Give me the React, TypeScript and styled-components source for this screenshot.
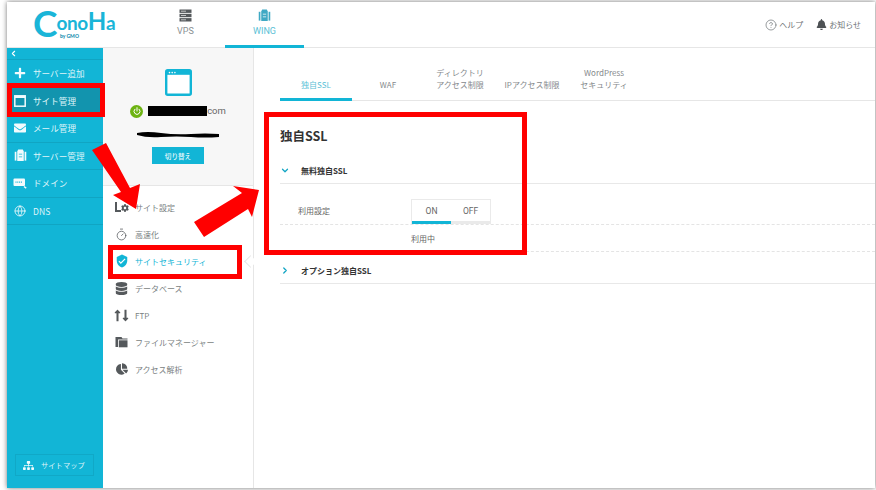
import React from "react";
import styled, { createGlobalStyle } from "styled-components";
import { FaPlus, FaEnvelope, FaBell, FaSitemap, FaDatabase, FaChartPie, FaCog, FaLongArrowAltUp, FaLongArrowAltDown } from "react-icons/fa";
import { MdVerifiedUser } from "react-icons/md";
import { CircleHelp, Timer, Globe, Power, ChevronLeft, ChevronDown, ChevronRight } from "lucide-react";

const GlobalStyle = createGlobalStyle`
  html, body { margin: 0; padding: 0; background: #fff; }
  * { box-sizing: border-box; }
  body { font-family: "Noto Sans CJK JP", "Noto Sans", sans-serif; }
`;

const Page = styled.div`
  position: relative;
  width: 876px;
  height: 490px;
  padding: 2px 1px 2px 7px;
  overflow: hidden;
`;

const Frame = styled.div`
  width: 868px;
  height: 486px;
  background: #fff;
  box-shadow: 0 0 5px rgba(0, 0, 0, 0.55);
  display: flex;
  flex-direction: column;
`;

const Header = styled.header`
  height: 46px;
  flex: none;
  display: flex;
  align-items: stretch;
  border-bottom: 1px solid #e6e6e6;
  padding-right: 14px;
`;

const LogoBox = styled.div`
  position: relative;
  width: 139px;
  padding: 9px 0 0 26px;
  font-family: "Lato", sans-serif;
  font-weight: 700;
  font-size: 19px;
  line-height: 20px;
  letter-spacing: -0.4px;
  color: #1ab5d8;
  white-space: nowrap;
`;

const LogoCap = styled.span`
  font-size: 37px;
  vertical-align: -7px;
  line-height: 20px;
  letter-spacing: -1px;
`;

const LogoTall = styled.span`
  font-size: 24px;
  line-height: 20px;
`;

const LogoBy = styled.span`
  position: absolute;
  left: 53px;
  top: 32px;
  font-size: 5px;
  line-height: 5px;
  letter-spacing: 0;
  font-weight: 900;
  color: #1a8fb0;
`;

const HeaderTab = styled.div<{ $active?: boolean }>`
  width: 79px;
  display: flex;
  flex-direction: column;
  align-items: center;
  padding-top: 7px;
  gap: 3px;
  font-family: "Roboto", sans-serif;
  font-size: 9px;
  line-height: 12px;
  color: ${(p) => (p.$active ? "#5bbfd6" : "#8a8f92")};
  border-bottom: 3px solid ${(p) => (p.$active ? "#12b5d6" : "transparent")};
  margin-bottom: -1px;
`;

const HeaderRight = styled.div`
  margin-left: auto;
  display: flex;
  align-items: center;
  gap: 13px;
  font-size: 8px;
  color: #6d7275;
`;

const HeaderLink = styled.span`
  display: flex;
  align-items: center;
  gap: 2px;
`;

const Body = styled.div`
  flex: 1;
  display: flex;
  min-height: 0;
`;

const Sidebar = styled.nav`
  width: 96px;
  flex: none;
  background: #12b5d6;
  display: flex;
  flex-direction: column;
  color: #dff4f9;
`;

const Collapse = styled.div`
  height: 12px;
  flex: none;
  display: flex;
  align-items: center;
  padding-left: 2px;
  border-bottom: 1px solid #10a5c3;
  color: #fff;
`;

const SideItem = styled.div<{ $active?: boolean }>`
  height: 27.5px;
  flex: none;
  display: flex;
  align-items: center;
  font-size: 8.6px;
  border-bottom: 1px solid #10a5c3;
  background: ${(p) => (p.$active ? "#1294ae" : "transparent")};
`;

const SideIcon = styled.span`
  width: 26px;
  flex: none;
  display: flex;
  justify-content: center;
  color: #f2fbfd;
`;

const SiteMapWrap = styled.div`
  margin-top: auto;
  padding: 0 9px 12px 8px;
`;

const SiteMapButton = styled.div`
  height: 22px;
  border: 1px solid #10a8c7;
  display: flex;
  align-items: center;
  gap: 7px;
  padding-left: 7px;
  font-size: 7.3px;
`;

const SubPanel = styled.aside`
  width: 151px;
  flex: none;
  border-right: 1px solid #e6e6e6;
  display: flex;
  flex-direction: column;
  position: relative;
`;

const SiteCard = styled.div`
  height: 138px;
  background: #f7f7f7;
  border-bottom: 1px solid #e6e6e6;
  display: flex;
  flex-direction: column;
  align-items: center;
  padding-top: 21px;
`;

const DomainRow = styled.div`
  display: flex;
  align-items: center;
  margin-top: 8px;
  font-family: "Roboto", sans-serif;
  font-size: 9.5px;
  line-height: 14px;
  color: #666;
`;

const PowerDot = styled.span`
  width: 13px;
  height: 13px;
  border-radius: 50%;
  background: #6db312;
  color: #fff;
  display: flex;
  align-items: center;
  justify-content: center;
  margin-right: 5px;
`;

const Redacted = styled.span`
  width: 59px;
  height: 10px;
  background: #000;
`;

const Scribble = styled.svg`
  margin-top: 12px;
`;

const SwitchButton = styled.div`
  width: 52px;
  height: 17px;
  margin-top: 9px;
  background: #12b5d6;
  color: #eafafd;
  font-size: 6.6px;
  font-weight: 500;
  display: flex;
  align-items: center;
  justify-content: center;
`;

const SubList = styled.div`
  display: flex;
  flex-direction: column;
  padding: 7.5px 0 0 11px;
`;

const SubItem = styled.div<{ $active?: boolean }>`
  height: 27px;
  display: flex;
  align-items: center;
  gap: 6px;
  font-size: 8px;
  color: ${(p) => (p.$active ? "#12b5d6" : "#7a7f82")};
`;

const SubIcon = styled.span<{ $active?: boolean }>`
  width: 15px;
  flex: none;
  display: flex;
  justify-content: center;
  color: ${(p) => (p.$active ? "#12b5d6" : "#55595c")};
`;

const GearWrap = styled.span`
  display: flex;
  align-items: flex-end;
`;

const ArrowsWrap = styled.span`
  display: flex;
  & > svg:first-child {
    margin-right: -5px;
  }
`;

const Notch = styled.span`
  position: absolute;
  right: -1px;
  top: 209px;
  width: 9px;
  height: 9px;
  margin-right: -0.5px;
  background: #fff;
  border-left: 1px solid #e6e6e6;
  border-bottom: 1px solid #e6e6e6;
  transform: rotate(45deg);
`;

const Content = styled.main`
  flex: 1;
  padding: 0 0 0 26px;
  display: flex;
  flex-direction: column;
`;

const Tabs = styled.div`
  height: 53px;
  flex: none;
  display: flex;
  border-bottom: 1px solid #e6e6e6;
`;

const Tab = styled.div<{ $active?: boolean }>`
  width: 72px;
  height: 53px;
  padding-bottom: 7px;
  display: flex;
  align-items: flex-end;
  justify-content: center;
  text-align: center;
  white-space: pre-line;
  font-size: 8px;
  line-height: 12px;
  color: ${(p) => (p.$active ? "#5bbfd6" : "#85898c")};
  border-bottom: 3px solid ${(p) => (p.$active ? "#12b5d6" : "transparent")};
`;

const Title = styled.h1`
  margin: 26px 0 7px;
  font-size: 12.5px;
  line-height: 18px;
  font-weight: 700;
  color: #333;
`;

const SectionHead = styled.div`
  height: 27px;
  flex: none;
  margin-top: 5px;
  display: flex;
  align-items: center;
  gap: 11px;
  border-bottom: 1px solid #e8e8e8;
  font-size: 8px;
  font-weight: 700;
  color: #333;
`;

const ChevronBox = styled.span`
  width: 10px;
  display: flex;
  justify-content: center;
  color: #12a5c4;
`;

const SettingRow = styled.div`
  height: 41px;
  flex: none;
  padding: 15px 0 0 18px;
  display: flex;
  border-bottom: 1px dashed #e4e4e4;
`;

const SettingLabel = styled.span`
  width: 113px;
  flex: none;
  font-size: 8px;
  line-height: 24px;
  color: #666;
`;

const Toggle = styled.div`
  width: 80px;
  height: 25px;
  display: flex;
  border: 1px solid #eaeaea;
  border-bottom: none;
`;

const ToggleSide = styled.div<{ $on?: boolean }>`
  flex: 1;
  text-align: center;
  font-family: "Roboto", sans-serif;
  font-size: 8.5px;
  line-height: 22px;
  color: #666;
  border-bottom: 3px solid ${(p) => (p.$on ? "#12b5d6" : "#eaeaea")};
`;

const StatusRow = styled.div`
  height: 27px;
  flex: none;
  padding-left: 131px;
  font-size: 8px;
  line-height: 27px;
  color: #666;
  border-bottom: 1px dashed #e4e4e4;
`;

const RedBox = styled.div<{ $l: number; $t: number; $w: number; $h: number }>`
  position: absolute;
  left: ${(p) => p.$l}px;
  top: ${(p) => p.$t}px;
  width: ${(p) => p.$w}px;
  height: ${(p) => p.$h}px;
  border: 5px solid #ff0000;
`;

const Overlay = styled.svg`
  position: absolute;
  left: 0;
  top: 0;
  width: 876px;
  height: 490px;
  pointer-events: none;
`;

const sideItems = [
  { label: "サーバー追加", icon: <FaPlus size={12} /> },
  { label: "サイト管理", active: true, icon: <SiteGlyph /> },
  { label: "メール管理", icon: <FaEnvelope size={12} /> },
  { label: "サーバー管理", icon: <RackGlyph size={13} color="#f2fbfd" /> },
  { label: "ドメイン", icon: <DomainGlyph /> },
  { label: "DNS", icon: <Globe size={12} strokeWidth={1.6} /> },
];

const subItems = [
  { label: "サイト設定", icon: <GearGlyph /> },
  { label: "高速化", icon: <Timer size={13} strokeWidth={1.4} /> },
  { label: "サイトセキュリティ", active: true, icon: <MdVerifiedUser size={14} /> },
  { label: "データベース", icon: <FaDatabase size={13} /> },
  { label: "FTP", icon: <ArrowsGlyph /> },
  { label: "ファイルマネージャー", icon: <FolderGlyph /> },
  { label: "アクセス解析", icon: <FaChartPie size={12} /> },
];

function SiteGlyph() {
  return (
    <svg width="12" height="12" viewBox="0 0 12 12">
      <rect x="0.8" y="0.8" width="10.4" height="10.4" fill="none" stroke="#f2fbfd" strokeWidth="1.5" />
      <rect x="1" y="1" width="10" height="2" fill="#f2fbfd" />
    </svg>
  );
}

function RackGlyph({ size, color }: { size: number; color: string }) {
  return (
    <svg width={size} height={size} viewBox="0 0 14 14" fill={color}>
      <path d="M4.5 0.5h5l0.5 1.5h0.5v11h-7v-11h0.5z M5.2 5v1h3.6v-1z M5.2 8v1h3.6v-1z" fillRule="evenodd" />
      <rect x="0.8" y="3" width="1.8" height="9.5" />
      <rect x="11.4" y="3" width="1.8" height="9.5" />
    </svg>
  );
}

function DomainGlyph() {
  return (
    <svg width="14" height="12" viewBox="0 0 14 12">
      <rect x="0.5" y="1.5" width="11.5" height="7.5" rx="1" fill="#f2fbfd" />
      <path d="M2.5 5.2h7" stroke="#12b5d6" strokeWidth="1.2" strokeDasharray="1 0.8" />
      <path d="M11 9.5l2.2 1.6" stroke="#f2fbfd" strokeWidth="1.5" />
    </svg>
  );
}

function GearGlyph() {
  return (
    <GearWrap>
      <svg width="6" height="10" viewBox="0 0 6 10">
        <path d="M1 0v9h5" fill="none" stroke="#55595c" strokeWidth="2" />
      </svg>
      <FaCog size={8} />
    </GearWrap>
  );
}

function ArrowsGlyph() {
  return (
    <ArrowsWrap>
      <FaLongArrowAltUp size={13} />
      <FaLongArrowAltDown size={13} />
    </ArrowsWrap>
  );
}

function FolderGlyph() {
  return (
    <svg width="13" height="12" viewBox="0 0 13 12" fill="#55595c">
      <path d="M0.5 1h6l1 1.5h5v1H3v7.5H0.5z" />
      <path d="M3.8 4.3h8.7v7H3.8z" />
    </svg>
  );
}

function HeaderServerGlyph() {
  return (
    <svg width="13" height="13" viewBox="0 0 13 13" fill="#55595c">
      <rect x="0.5" y="0.5" width="12" height="3.4" />
      <rect x="0.5" y="4.8" width="12" height="3.4" />
      <rect x="0.5" y="9.1" width="12" height="3.4" />
      <path d="M2 2.2h5M2 6.5h5M2 10.8h5" stroke="#ddd" strokeWidth="0.8" />
    </svg>
  );
}

function SiteWindow() {
  return (
    <svg width="27" height="27" viewBox="0 0 27 27">
      <rect x="1.2" y="1.2" width="24.6" height="24.6" rx="1.5" fill="#fff" stroke="#12b5d6" strokeWidth="2.4" />
      <rect x="1.2" y="1.2" width="24.6" height="4.6" fill="#12b5d6" />
      <circle cx="4.5" cy="3.6" r="0.8" fill="#fff" />
      <circle cx="7.2" cy="3.6" r="0.8" fill="#fff" />
      <circle cx="9.9" cy="3.6" r="0.8" fill="#fff" />
    </svg>
  );
}

export default function App() {
  return (
    <Page>
      <GlobalStyle />
      <Frame>
        <Header>
          <LogoBox>
            <LogoCap>C</LogoCap>ono<LogoTall>H</LogoTall>a
            <LogoBy>by GMO</LogoBy>
          </LogoBox>
          <HeaderTab>
            <HeaderServerGlyph />
            VPS
          </HeaderTab>
          <HeaderTab $active>
            <RackGlyph size={13} color="#3fa9c4" />
            WING
          </HeaderTab>
          <HeaderRight>
            <HeaderLink>
              <CircleHelp size={12} strokeWidth={1.4} />
              ヘルプ
            </HeaderLink>
            <HeaderLink>
              <FaBell size={11} color="#4d5154" />
              お知らせ
            </HeaderLink>
          </HeaderRight>
        </Header>
        <Body>
          <Sidebar>
            <Collapse>
              <ChevronLeft size={9} strokeWidth={3} />
            </Collapse>
            {sideItems.map((item) => (
              <SideItem key={item.label} $active={item.active}>
                <SideIcon>{item.icon}</SideIcon>
                {item.label}
              </SideItem>
            ))}
            <SiteMapWrap>
              <SiteMapButton>
                <FaSitemap size={11} color="#f2fbfd" />
                サイトマップ
              </SiteMapButton>
            </SiteMapWrap>
          </Sidebar>
          <SubPanel>
            <SiteCard>
              <SiteWindow />
              <DomainRow>
                <PowerDot>
                  <Power size={8} strokeWidth={3} />
                </PowerDot>
                <Redacted />
                com
              </DomainRow>
              <Scribble width="84" height="8" viewBox="0 0 84 8">
                <path d="M1 3q10-2 24 0t30 1q14-1 28 0v3q-14 1-28 0t-30 0q-14 1-24-2z" fill="#000" />
              </Scribble>
              <SwitchButton>切り替え</SwitchButton>
            </SiteCard>
            <SubList>
              {subItems.map((item) => (
                <SubItem key={item.label} $active={item.active}>
                  <SubIcon $active={item.active}>{item.icon}</SubIcon>
                  {item.label}
                </SubItem>
              ))}
            </SubList>
            <Notch />
          </SubPanel>
          <Content>
            <Tabs>
              <Tab $active>独自SSL</Tab>
              <Tab>WAF</Tab>
              <Tab>{"ディレクトリ\nアクセス制限"}</Tab>
              <Tab>IPアクセス制限</Tab>
              <Tab>{"WordPress\nセキュリティ"}</Tab>
            </Tabs>
            <Title>独自SSL</Title>
            <SectionHead>
              <ChevronBox>
                <ChevronDown size={11} strokeWidth={3} />
              </ChevronBox>
              無料独自SSL
            </SectionHead>
            <SettingRow>
              <SettingLabel>利用設定</SettingLabel>
              <Toggle>
                <ToggleSide $on>ON</ToggleSide>
                <ToggleSide>OFF</ToggleSide>
              </Toggle>
            </SettingRow>
            <StatusRow>利用中</StatusRow>
            <SectionHead>
              <ChevronBox>
                <ChevronRight size={11} strokeWidth={3} />
              </ChevronBox>
              オプション独自SSL
            </SectionHead>
          </Content>
        </Body>
      </Frame>
      <RedBox $l={7} $t={83} $w={98} $h={34} />
      <RedBox $l={108} $t={245} $w={134} $h={34} />
      <RedBox $l={264} $t={112} $w={263} $h={143} />
      <Overlay viewBox="0 0 876 490">
        <polygon points="92,150 106,143 130,188 140,184 136,209 113,195 121,192" fill="#ff0000" />
        <polygon points="194,222 242,193 233,186 259,190 252,217 248,209 204,237" fill="#ff0000" />
      </Overlay>
    </Page>
  );
}
